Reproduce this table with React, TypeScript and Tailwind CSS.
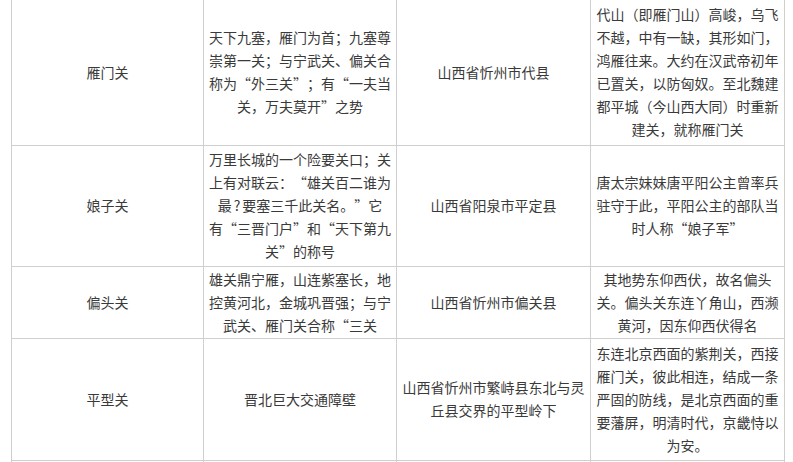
import React from "react";

type Row = {
  name: string;
  desc: string[];
  place: string[];
  note: string[];
  h: string;
};

const rows: Row[] = [
  {
    name: "雁门关",
    desc: [
      "天下九塞，雁门为首；九塞尊",
      "崇第一关；与宁武关、偏关合",
      "称为“外三关”；有“一夫当",
      "关，万夫莫开”之势",
    ],
    place: ["山西省忻州市代县"],
    note: [
      "代山（即雁门山）高峻，乌飞",
      "不越，中有一缺，其形如门，",
      "鸿雁往来。大约在汉武帝初年",
      "已置关，以防匈奴。至北魏建",
      "都平城（今山西大同）时重新",
      "建关，就称雁门关",
    ],
    h: "h-[145px]",
  },
  {
    name: "娘子关",
    desc: [
      "万里长城的一个险要关口；关",
      "上有对联云：“雄关百二谁为",
      "最?要塞三千此关名。”它",
      "有“三晋门户”和“天下第九",
      "关”的称号",
    ],
    place: ["山西省阳泉市平定县"],
    note: [
      "唐太宗妹妹唐平阳公主曾率兵",
      "驻守于此，平阳公主的部队当",
      "时人称“娘子军”",
    ],
    h: "h-[121px]",
  },
  {
    name: "偏头关",
    desc: [
      "雄关鼎宁雁，山连紫塞长，地",
      "控黄河北，金城巩晋强；与宁",
      "武关、雁门关合称“三关",
    ],
    place: ["山西省忻州市偏关县"],
    note: [
      "其地势东仰西伏，故名偏头",
      "关。偏头关东连丫角山，西濒",
      "黄河，因东仰西伏得名",
    ],
    h: "h-[72px]",
  },
  {
    name: "平型关",
    desc: ["晋北巨大交通障壁"],
    place: ["山西省忻州市繁峙县东北与灵", "丘县交界的平型岭下"],
    note: [
      "东连北京西面的紫荆关，西接",
      "雁门关，彼此相连，结成一条",
      "严固的防线，是北京西面的重",
      "要藩屏，明清时代，京畿恃以",
      "为安。",
    ],
    h: "h-[122px]",
  },
];

// the old page font set quotes on a full em, open quote to the right, close quote to the left
const Line = ({ text }: { text: string }) => (
  <span className="whitespace-nowrap">
    {text.split(/([“”?])/).map((part, i) =>
      part === "“" ? (
        <span key={i} className="inline-block w-[14px] text-right">
          {part}
        </span>
      ) : part === "”" ? (
        <span key={i} className="inline-block w-[14px] text-left">
          {part}
        </span>
      ) : part === "?" ? (
        <span key={i} className="px-[2px]">
          {part}
        </span>
      ) : (
        part
      )
    )}
  </span>
);

const Lines = ({ lines }: { lines: string[] }) => (
  <>
    {lines.map((l, i) => (
      <React.Fragment key={i}>
        {i > 0 && <br />}
        <Line text={l} />
      </React.Fragment>
    ))}
  </>
);

const cell =
  "border border-[#cfcfcf] px-1 py-px text-center align-middle text-[14px] leading-[23px] text-[#3a3a3a] [text-spacing-trim:space-all]";

export default function App() {
  return (
    <div
      lang="zh-CN"
      className="min-h-screen bg-white"
      style={{ fontFamily: '"Noto Sans CJK SC", "Noto Sans", sans-serif' }}
    >
      <table className="ml-[11px] w-[773px] table-fixed border-collapse">
        <colgroup>
          <col className="w-[192px]" />
          <col className="w-[193px]" />
          <col className="w-[194px]" />
          <col className="w-[194px]" />
        </colgroup>
        <tbody>
          {rows.map((r, idx) => {
            const c = `${cell} ${idx === 0 ? "border-t-0" : ""}`;
            return (
              <tr key={r.name} className={r.h}>
                <td className={c}>{r.name}</td>
                <td className={c}>
                  <Lines lines={r.desc} />
                </td>
                <td className={c}>
                  <Lines lines={r.place} />
                </td>
                <td className={c}>
                  <Lines lines={r.note} />
                </td>
              </tr>
            );
          })}
          <tr className="h-[40px]">
            <td className={cell}></td>
            <td className={cell}></td>
            <td className={cell}></td>
            <td className={cell}></td>
          </tr>
        </tbody>
      </table>
    </div>
  );
}
